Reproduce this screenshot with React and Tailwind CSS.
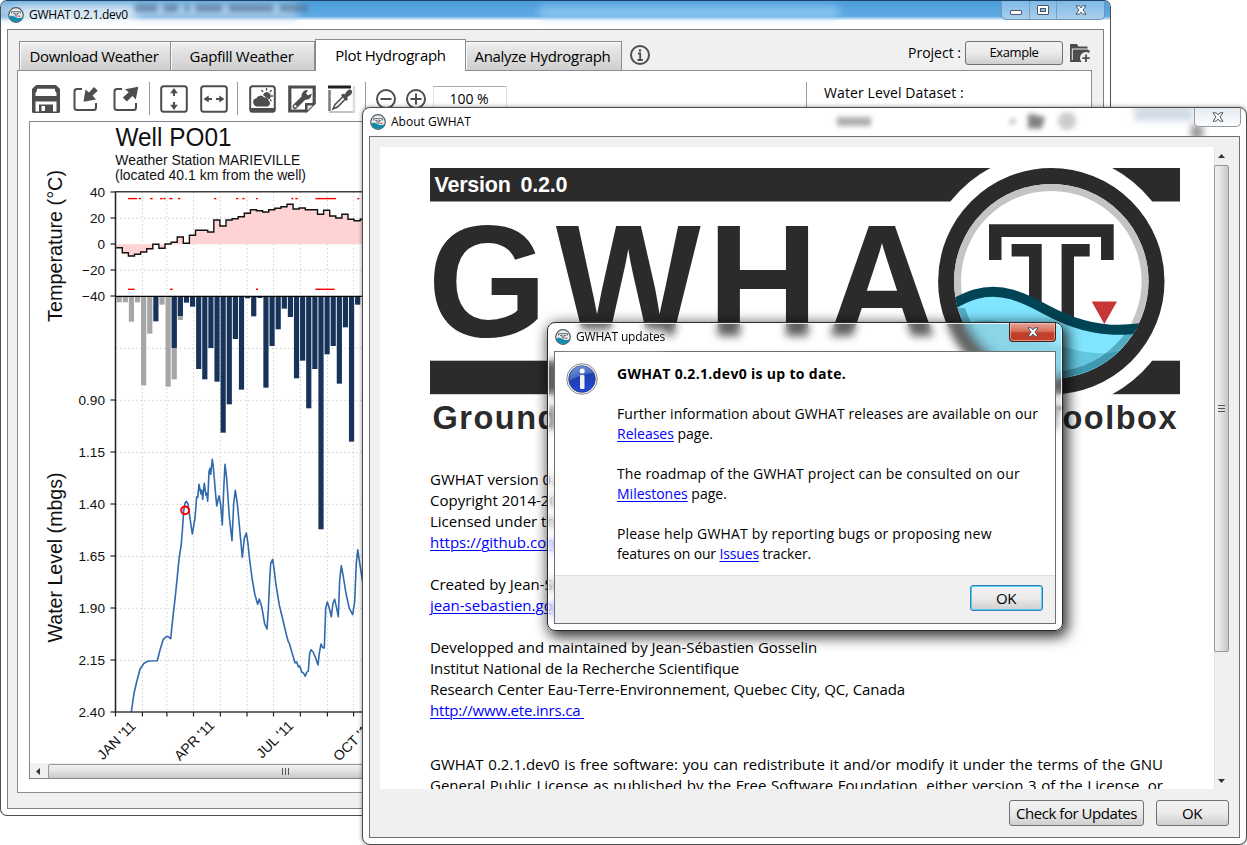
import React from "react";

const INK = "#4d4d4d";

/* ---------- chart data ---------- */
const TEMP = [383, 398, 408, 403, 396, 386, 373, 385, 372, 367, 351, 370, 346, 331, 331, 336, 300, 318, 300, 296, 290, 280, 269, 272, 276, 269, 265, 260, 253, 267, 264, 269, 269, 283, 271, 288, 294, 283, 298, 302, 298];
// [rain depth, snow depth] measured along the inverted axis
const PRECIP = [[0, 37], [0, 37], [0, 95], [0, 37], [0, 286], [0, 131], [94, 0], [0, 44], [0, 290], [174, 268], [78, 90], [38, 0], [50, 0], [237, 0], [268, 0], [174, 0], [275, 0], [428, 0], [343, 0], [147, 0], [299, 0], [25, 0], [79, 0], [24, 0], [293, 0], [168, 0], [118, 0], [56, 0], [81, 0], [265, 0], [212, 0], [355, 0], [237, 0], [718, 0], [193, 0], [168, 0], [281, 0], [112, 0], [455, 0], [44, 0]];
const LEVEL = [[394, 636], [402, 580], [410, 545], [420, 508], [432, 490], [445, 483], [472, 482], [480, 450], [490, 418], [500, 409], [507, 412], [512, 416], [520, 340], [526, 290], [532, 230], [538, 170], [543, 140], [547, 95], [551, 32], [555, 10], [559, 4], [564, 12], [570, 55], [577, 102], [585, 55], [590, -10], [593, -8], [597, -47], [603, -18], [605, -30], [608, -2], [613, -50], [618, -14], [620, -20], [623, 4], [627, -85], [630, -95], [632, -77], [637, -122], [640, -100], [647, -15], [650, 18], [657, -13], [662, 15], [667, 75], [671, -30], [675, -107], [680, -65], [688, 50], [696, 122], [701, 10], [706, -29], [712, 10], [719, 88], [727, 172], [733, 115], [739, 99], [743, 125], [749, 180], [757, 240], [765, 285], [773, 313], [778, 297], [785, 320], [794, 372], [801, 387], [805, 330], [809, 240], [812, 190], [818, 178], [822, 205], [828, 255], [838, 315], [850, 365], [860, 408], [865, 425], [868, 430], [878, 465], [885, 488], [890, 486], [895, 500], [899, 498], [905, 516], [910, 518], [916, 529], [920, 517], [925, 513], [929, 460], [933, 449], [940, 457], [947, 475], [954, 495], [958, 460], [963, 432], [968, 443], [973, 444], [977, 325], [982, 306], [988, 325], [994, 350], [999, 310], [1004, 298], [1009, 320], [1015, 350], [1019, 240], [1024, 197], [1030, 230], [1038, 280], [1048, 325], [1058, 344], [1064, 305], [1069, 190], [1073, 149], [1080, 195], [1092, 270]];
const GAPS_TOP = [[384, 411], [416, 423], [450, 458], [480, 488], [490, 497], [508, 518], [534, 541], [642, 649], [708, 715], [727, 734], [768, 774], [874, 880], [886, 893], [946, 1008], [1072, 1078]];
const GAPS_BOTTOM = [[384, 404], [510, 518], [768, 774], [946, 1004]];
const MONTHS = [142.4, 166.9, 193.5, 220.4, 247, 273.5, 300.4, 327.4, 353.6];

const BIN = 6.1;
const X0 = 116.2;

function Hydrograph() {
  let step = "";
  TEMP.forEach((v, i) => {
    const y = (120 + v / 3).toFixed(1);
    const x = X0 + i * BIN;
    step += (i ? "L" : "M") + x.toFixed(1) + " " + y + "L" + (x + BIN).toFixed(1) + " " + y;
  });
  const area = step + `L${X0 + TEMP.length * BIN} 244.2L${X0} 244.2Z`;
  const level = LEVEL.map(([x, y]) => (x / 3).toFixed(1) + "," + (500 + y / 3).toFixed(1)).join(" ");
  const yLabels = [["40", 192], ["20", 218], ["0", 244], ["−20", 270], ["−40", 296], ["0.90", 400], ["1.15", 452], ["1.40", 504], ["1.65", 556], ["1.90", 608], ["2.15", 660], ["2.40", 712]];
  return (
    <svg viewBox="30 122 345 641" width="345" height="641" className="block shrink-0" fontFamily="'Liberation Sans', Arial, sans-serif">
      <g stroke="#cfcfcf" strokeWidth="1" strokeDasharray="1.5 2.5" fill="none">
        {MONTHS.map((x) => <path key={x} d={`M${x} 192V712`} />)}
        {[218, 270, 348, 400, 452, 504, 556, 608, 660].map((y) => <path key={y} d={`M116 ${y + 0.3}H375`} />)}
      </g>
      <path d={area} fill="#ffd3d3" />
      <path d={step} fill="none" stroke="#111" strokeWidth="1.4" />
      <g stroke="#f00" strokeWidth="1.4">
        {GAPS_TOP.map(([a, b]) => <path key={a} d={`M${a / 3} 198.6H${b / 3}`} />)}
        {GAPS_BOTTOM.map(([a, b]) => <path key={a} d={`M${a / 3} 289.3H${b / 3}`} />)}
      </g>
      {PRECIP.map(([rain, snow], i) => {
        const x = 116.6 + i * 6.115;
        return (
          <g key={i}>
            {snow > 0 && <rect x={x} y="296.5" width="5.2" height={290 + snow / 3 - 296.5} fill="#a6a6a6" />}
            {rain > 0 && <rect x={x} y="296.5" width="5.2" height={290 + rain / 3 - 296.5} fill="#18335a" />}
          </g>
        );
      })}
      <polyline points={level} fill="none" stroke="#3269ad" strokeWidth="1.6" strokeLinejoin="round" />
      <circle cx="185.1" cy="510.3" r="3.9" fill="none" stroke="#f00" strokeWidth="2" />
      <path d="M115.5 296.3H375" stroke="#000" strokeWidth="1.3" />
      <path d="M375 191.8H115.5V712H375" fill="none" stroke="#3c3f3c" strokeWidth="1.4" />
      <path d="M115.5 191.5V712.5" stroke="#222" strokeWidth="1.2" />
      <g stroke="#222" strokeWidth="1.2">
        {yLabels.map(([t, y]) => <path key={t} d={`M110.5 ${y}H115.5`} />)}
        {[115.5, ...MONTHS].map((x) => <path key={x} d={`M${x} 712V716.5`} />)}
      </g>
      <g fill="#111">
        <text x="115.5" y="146.2" fontSize="25.3" textLength="116" lengthAdjust="spacingAndGlyphs">Well PO01</text>
        <text x="115.3" y="165" fontSize="14" textLength="185" lengthAdjust="spacingAndGlyphs">Weather Station MARIEVILLE</text>
        <text x="115" y="179.6" fontSize="14" textLength="191" lengthAdjust="spacingAndGlyphs">(located 40.1 km from the well)</text>
        {yLabels.map(([t, y]) => (
          <text key={t} x="105" y={y + 4.6} fontSize="13.6" textAnchor="end">{t}</text>
        ))}
        <text transform="translate(61.9 322) rotate(-90)" fontSize="20" textLength="152" lengthAdjust="spacingAndGlyphs">Temperature (°C)</text>
        <text transform="translate(61.9 642.5) rotate(-90)" fontSize="20" textLength="170" lengthAdjust="spacingAndGlyphs">Water Level (mbgs)</text>
        {[["JAN '11", 103, 760.5], ["APR '11", 180, 761.5], ["JUL '11", 262, 759], ["OCT '11", 339, 762]].map(([t, x, y]) => (
          <text key={t} transform={`translate(${x} ${y}) rotate(-45)`} fontSize="14">{t}</text>
        ))}
      </g>
    </svg>
  );
}

/* ---------- logo ---------- */
function LogoMark({ id }) {
  return (
    <g>
      <defs>
        <clipPath id={id}><circle cx="1051.3" cy="281.2" r="97.5" /></clipPath>
        <clipPath id={`${id}-water`}><path d="M940 308H1000L1080 325H1160V400H940Z" /></clipPath>
      </defs>
      <circle cx="1051.3" cy="281.2" r="105.2" fill="#fff" stroke="#2b2b2b" strokeWidth="16" />
      <circle cx="1051.3" cy="281.2" r="93.8" fill="none" stroke="#c4c4c4" strokeWidth="7" />
      <path d="M989 224.2H1113.7V260H1101V237H1001.5V260H989Z" fill="#2b2b2b" />
      <path d="M1011.6 244H1041.7V320H1029V256.4H1011.6ZM1061.6 244H1089.7V256.4H1074V330H1061.6Z" fill="#2b2b2b" />
      <g clipPath={`url(#${id})`}>
        <path d="M940 313C965 297 985 290 1012 295C1035 300 1050 313 1075 321C1100 330 1120 331 1150 327V400H940Z" fill="#80e5ff" />
        <path d="M955 330C985 310 1015 325 1040 337C1065 349 1090 355 1110 353L1150 345V400H960Z" fill="#5bbcd6" opacity=".75" />
        <circle cx="1051.3" cy="281.2" r="93.8" fill="none" stroke="#004455" strokeOpacity=".35" strokeWidth="7" clipPath={`url(#${id}-water)`} />
        <path d="M940 312C965 296 985 286.500 1012 294.500C1037 302 1052 315.500 1075 322.500C1100 331 1120 331.500 1150 327" fill="none" stroke="#004455" strokeWidth="10" />
      </g>
      <path d="M1091.7 301.500H1117L1104.300 324Z" fill="#c83737" />
    </g>
  );
}

function AppIcon() {
  return (
    <svg viewBox="0 0 16 16" width="16" height="16" className="shrink-0">
      <circle cx="8" cy="8" r="7.300" fill="#e9eef0" stroke="#4f5b62" strokeWidth="1.200" />
      <path d="M1.300 9.500C3.500 8 5.500 9 8 10.200S12.500 11.500 14.800 10A7 7 0 0 1 8 15A7 7 0 0 1 1.300 9.500Z" fill="#138bad" />
      <path d="M3.500 6.500V4.700H12.500V6.500" fill="none" stroke="#5f666b" strokeWidth="1" />
      <path d="M5.200 6.500H7.200V9.500M10.800 6.500H9V10" fill="none" stroke="#5f666b" strokeWidth="1" />
      <rect x="10.500" y="8.500" width="1.800" height="1.500" fill="#e04a4a" />
    </svg>
  );
}

function Banner() {
  return (
    <svg viewBox="430 168 750 270" width="750" height="270" className="block" fontFamily="'Liberation Sans', Arial, sans-serif" fontWeight="bold">
      <rect x="430" y="168" width="750" height="33.500" fill="#2b2b2b" />
      <rect x="430" y="360.700" width="750" height="33.500" fill="#2b2b2b" />
      <circle cx="1051.3" cy="281.2" r="128.500" fill="#fff" />
      <text x="434.500" y="192" fontSize="21.500" fill="#fff" textLength="133" wordSpacing="4">Version 0.2.0</text>
      <g transform="translate(427.700 0) scale(.96 1)">
        <text x="0 133.500 291.500 415.300" y="336.300" fontSize="160" fill="#2b2b2b">GWHA</text>
      </g>
      <LogoMark id="logo-large" />
      <text x="432.500" y="428.500" fontSize="32.500" fill="#2b2b2b" textLength="744">Ground-Water Hydrograph Analysis Toolbox</text>
    </svg>
  );
}

/* ---------- toolbar icons ---------- */
const Icon = ({ children, w = 28 }) => (
  <svg viewBox={`0 0 ${w} ${w}`} width={w} height={w} className="shrink-0" fill="none" stroke={INK} strokeWidth="2">{children}</svg>
);
const SaveIcon = () => (
  <Icon>
    <path d="M4 0H24L28 4V26.500Q28 28 26.500 28H1.500Q0 28 0 26.500V4Z" fill={INK} stroke="none" />
    <path d="M5 3.800H23V5.800L24.500 8V11H3.500V8L5 5.800Z" fill="#fff" stroke="none" />
    <path d="M3.500 16.500H24.500V26.500H21V19.500H7V26.500H3.500Z" fill="#fff" stroke="none" />
    <path d="M9.500 21H13V26H9.500Z" fill="#fff" stroke="none" />
  </Icon>
);
const ImportIcon = () => (
  <Icon>
    <path d="M10 4H5Q2.500 4 2.500 6.500V22.500Q2.500 25 5 25H21.500Q24 25 24 22.500V18" />
    <path d="M22 2L25.800 5.800L20.500 10.500L24 14.500L11.500 16.800L13.500 4.500L17 7.500Z" fill={INK} stroke="none" />
  </Icon>
);
const ExportIcon = () => (
  <Icon>
    <path d="M10 4H5Q2.500 4 2.500 6.500V22.500Q2.500 25 5 25H21.500Q24 25 24 22.500V18" />
    <path d="M26.300 1.800L23.800 14.500L20.500 11L14.800 16.500L10.800 12.500L16.800 7.200L13 4.200Z" fill={INK} stroke="none" />
  </Icon>
);
const FitHeightIcon = () => (
  <Icon>
    <rect x="1.200" y="1.200" width="25.600" height="25.600" rx="2.500" />
    <path d="M14 5V11M14 23V17" strokeWidth="2" />
    <path d="M14 3L17.800 8.200H10.200ZM14 25L17.800 19.800H10.200Z" fill={INK} stroke="none" />
  </Icon>
);
const FitWidthIcon = () => (
  <Icon>
    <rect x="1.200" y="1.200" width="25.600" height="25.600" rx="2.500" />
    <path d="M5 14H12M23 14H16" strokeWidth="2" />
    <path d="M3.500 14L8.700 10.500V17.500ZM24.500 14L19.300 10.500V17.500Z" fill={INK} stroke="none" />
  </Icon>
);
const WeatherIcon = () => (
  <Icon>
    <rect x="2.200" y="1.200" width="24.600" height="25.600" rx="2.500" />
    <path d="M2 23H27V26.500H2Z" fill={INK} stroke="none" />
    <path d="M9 21.500A4.200 4.200 0 0 1 8.500 13.200A4.300 4.300 0 0 1 16 12.500A3.500 3.500 0 0 1 20.500 15.500A3.300 3.300 0 0 1 19.500 21.500Z" fill={INK} stroke="none" />
    <path d="M15 10A4 4 0 1 1 21 14.500" fill={INK} stroke="none" />
    <path d="M18.500 3V5.500M13.500 5L15 7M23.500 5L22 7M25 11H22.800M23.500 16L22 14.500" strokeWidth="1.300" />
  </Icon>
);
const WrenchIcon = () => (
  <Icon>
    <path d="M1.800 2H26.200V18L18.500 26H1.800Z" strokeWidth="3.200" />
    <path d="M17 28V18H28Z" fill={INK} stroke="none" />
    <path d="M19.500 25.500V20.500H25Z" fill="#fff" stroke="none" opacity=".85" />
    <path d="M7 21.500L17 11.500" strokeWidth="5" strokeLinecap="round" />
    <path d="M14 12.500A5.500 5.500 0 0 1 20 5L18 8.500L20 10.500L23.500 8.500A5.500 5.500 0 0 1 16.500 14.500Z" fill={INK} stroke="none" />
    <circle cx="7.300" cy="21.200" r="1.200" fill="#fff" stroke="none" />
  </Icon>
);
const DropperIcon = () => (
  <Icon>
    <path d="M0 2H23" stroke="#1f1f1f" strokeWidth="3" />
    <path d="M1.500 5V26" stroke="#7a7a7a" strokeWidth="2.500" />
    <path d="M26 1V28" stroke="#dcdcdc" strokeWidth="2.500" />
    <path d="M1 27H25" stroke="#c2c2c2" strokeWidth="2" />
    <path d="M5 24L7 19.500L15.500 11L18 13.500L9.500 22Z" fill="#f4f4f4" strokeWidth="1.500" />
    <path d="M13 10.500L15 8.500L16.500 9.500L19.500 5.500Q22 3.500 23.500 5.200Q25 7 23 9.500L19 12.500L20 14L18.200 16Z" fill={INK} stroke="none" />
  </Icon>
);
const ZoomIcon = ({ plus }) => (
  <Icon w={20}>
    <circle cx="10" cy="10" r="9" />
    <path d={plus ? "M4.500 10H15.500M10 4.500V15.500" : "M4.500 10H15.500"} />
  </Icon>
);
const InfoIcon = () => (
  <Icon w={20}>
    <circle cx="10" cy="10" r="9" />
    <path d="M8 8.500H10.200V15M7.500 15H12.800" strokeWidth="1.800" />
    <circle cx="10" cy="5.500" r="1.200" fill={INK} stroke="none" />
  </Icon>
);
const FolderIcon = () => (
  <svg viewBox="0 0 20 20" width="20" height="20" className="shrink-0">
    <path d="M0 1H7L8.500 3.500H17.500V7H19.500V19H0Z" fill={INK} />
    <path d="M2.300 17V6H17.500" stroke="#f0f0f0" fill="none" strokeWidth="1" />
    <circle cx="16" cy="15" r="6" fill="#f0f0f0" />
    <path d="M16 11.500V19M12.300 15.200H19.700" stroke={INK} strokeWidth="1.800" />
  </svg>
);
const Sep = () => <div className="h-[33px] w-px shrink-0 bg-[#9a9a9a]" />;

const CloseGlyph = () => (
  <svg viewBox="0 0 12 10" width="12" height="10">
    <path d="M1 0.800H4.200L6 2.900L7.800 0.800H11L8 5L11 9.200H7.800L6 7.100L4.200 9.200H1L4 5Z" fill="#fff" stroke="#4e5566" strokeWidth="1" />
  </svg>
);

function Tab({ className, children }) {
  return (
    <div className={"box-border flex items-center justify-center border border-b-0 border-[#898c95] " + className}>{children}</div>
  );
}
const TAB_OFF = "h-[29px] pr-[2px] bg-linear-to-b from-[#f2f2f2] from-0% via-[#e2e2e2] via-35% to-[#cfcfcf] shadow-[inset_1px_1px_0_#fafafa]";

function PushButton({ className, children }) {
  return (
    <div className={"flex items-center justify-center rounded-[3px] border bg-linear-to-b from-[#f3f3f3] from-0% via-[#ebebeb] via-49% to-[#cfcfcf] whitespace-nowrap " + className}>{children}</div>
  );
}

function MainWindow() {
  return (
    <div className="absolute top-0 left-0 flex h-[816px] w-[1111px] flex-col rounded-[7px] border border-[#4c4f55] border-t-[#1d4468] bg-white px-[6px] pb-[6px]">
      <div className="-mx-[6px] flex h-[28px] shrink-0 items-start overflow-hidden rounded-t-[6px] bg-linear-to-b from-[#4b9ddb] from-0% via-[#5fabe2] via-55% to-white to-70%">
        <div className="relative flex h-[28px] w-[330px] items-center pl-[7px]">
          <div className="absolute top-[1px] -left-2 h-[17px] w-[305px] bg-[#b9d3ea] opacity-80 blur-[5px]" />
          <div className="absolute top-[8px] left-[14px] h-[14px] w-[120px] bg-white opacity-80 blur-[6px]" />
          <div className="absolute top-[3px] left-[134px] flex h-[8px] gap-[7px] opacity-60 blur-[2px]">
            <div className="w-[22px] bg-[#4f7096]" /><div className="w-[14px] bg-[#4f7096]" /><div className="w-[4px] bg-[#4f7096]" /><div className="w-[26px] bg-[#4f7096]" /><div className="w-[44px] bg-[#4f7096]" /><div className="w-[28px] bg-[#4f7096]" />
          </div>
          <div className="relative flex items-center gap-[5px]">
            <AppIcon />
            <span className="text-[12px] tracking-[-0.25px] whitespace-nowrap">GWHAT 0.2.1.dev0</span>
          </div>
        </div>
        <div className="mt-[5px] ml-[208px] h-[12px] w-[300px] rounded bg-[#9bd0f8] opacity-70 blur-[4px]" />
        <div className="ml-[162px] flex h-[19px] w-[104px] divide-x divide-[#7f9fbd] rounded-b-[5px] border border-t-0 border-[#7494b3] bg-linear-to-b from-[#7fb9e5] to-[#a9d0ee]">
          <div className="flex w-[28px] items-end justify-center pb-[4px]"><div className="h-[5px] w-[12px] rounded-[1px] border border-[#4e5566] bg-white" /></div>
          <div className="flex w-[27px] items-center justify-center"><div className="flex h-[10px] w-[12px] items-center justify-center rounded-[1px] border border-[#4e5566] bg-white"><div className="h-[4px] w-[6px] border border-[#4e5566] bg-[#8cc0e8]" /></div></div>
          <div className="flex flex-1 items-center justify-center"><CloseGlyph /></div>
        </div>
      </div>
      <div className="flex min-h-0 flex-1 flex-col border border-[#7d7f83] bg-[#f0f0f0] pr-[11px] pb-[15px] pl-[9px]">
        <div className="flex h-[40px] shrink-0 items-end pl-[2px] text-[15px]">
          <Tab className={TAB_OFF + " w-[152px] tracking-[-0.36px]"}>Download Weather</Tab>
          <Tab className={TAB_OFF + " w-[144px] border-l-0 tracking-[-0.3px]"}>Gapfill Weather</Tab>
          <Tab className="relative z-10 -mb-px h-[32px] w-[151px] bg-white pb-[1px] tracking-[-0.3px]">Plot Hydrograph</Tab>
          <Tab className={TAB_OFF + " w-[156px] border-l-0 pr-0 tracking-[-0.31px]"}>Analyze Hydrograph</Tab>
          <div className="ml-[8px] flex h-[31px] items-center"><InfoIcon /></div>
          <div className="mr-[2px] ml-auto flex h-[35px] items-center gap-[4px]">
            <span className="text-[14px]">Project :</span>
            <PushButton className="h-[24px] w-[98px] border-[#707070] text-[13px] tracking-[-0.4px]">Example</PushButton>
            <div className="ml-[3px]"><FolderIcon /></div>
          </div>
        </div>
        <div className="flex min-h-0 flex-1 border border-[#898c95] bg-white">
          <div className="flex w-[788px] shrink-0 flex-col pt-[11px] pb-[13px] pl-[11px]">
            <div className="flex h-[33px] items-center pl-[3px]">
              <SaveIcon /><div className="w-[12px]" /><ImportIcon /><div className="w-[12px]" /><ExportIcon />
              <div className="w-[9px]" /><Sep /><div className="w-[10px]" />
              <FitHeightIcon /><div className="w-[12px]" /><FitWidthIcon />
              <div className="w-[9px]" /><Sep /><div className="w-[10px]" />
              <WeatherIcon /><div className="w-[12px]" /><WrenchIcon /><div className="w-[12px]" /><DropperIcon />
              <div className="w-[9px]" /><Sep /><div className="w-[10px]" />
              <ZoomIcon /><div className="w-[10px]" /><ZoomIcon plus />
              <div className="ml-[7px] flex h-[26px] w-[74px] items-center justify-center border border-[#dfe2e8] border-t-[#abadb3] pr-[2px] text-[14px]">100 %</div>
            </div>
            <div className="mt-[6px] flex min-h-0 flex-1 flex-col overflow-hidden border border-[#828790]">
              <Hydrograph />
              <div className="flex h-[16px] shrink-0 items-center bg-[#efefef]">
                <div className="flex w-[18px] justify-center pr-[2px]"><svg width="4" height="7" viewBox="0 0 4 7"><path d="M4 0V7L0 3.500Z" fill="#333" /></svg></div>
                <div className="flex h-[15px] flex-1 items-center rounded-[2px] border border-[#979797] bg-linear-to-b from-[#f2f2f2] from-0% via-[#e3e3e3] via-45% to-[#c8c8cb] pl-[233px]">
                  <div className="flex gap-[2px]">
                    <div className="h-[7px] w-px bg-[#555]" /><div className="h-[7px] w-px bg-[#555]" /><div className="h-[7px] w-px bg-[#555]" />
                  </div>
                </div>
              </div>
            </div>
          </div>
          <div className="flex gap-[17px] pt-[11px]">
            <Sep />
            <span className="pt-[4px] text-[14px] tracking-[0.1px]">Water Level Dataset :</span>
          </div>
        </div>
      </div>
    </div>
  );
}

const Line = ({ children, className = "" }) => <div className={"h-[21px] leading-[21px] whitespace-nowrap " + className}>{children}</div>;
const LINK = "text-[#0000ff] underline decoration-1 underline-offset-2";

function AboutWindow() {
  return (
    <div className="absolute top-[107px] left-[362px] flex h-[738px] w-[885px] flex-col rounded-[8px] border border-[#4c4c4c] bg-white px-[6px] pb-[6px] shadow-[0_0_4px_rgba(0,0,0,0.45)]">
      <div className="relative -mx-[6px] flex h-[28px] shrink-0 justify-between overflow-hidden rounded-t-[7px]">
        <div className="flex items-center gap-[5px] pl-[7px]">
          <AppIcon />
          <span className="text-[12px]">About GWHAT</span>
        </div>
        <div className="flex items-start">
          <div className="mr-[58px] flex h-[26px] items-center gap-[13px] opacity-70 blur-[2.500px]">
            <div className="mr-[126px] h-[9px] w-[34px] bg-[#8a8a8a]" />
            <div className="size-[5px] rounded-full bg-[#777]" />
            <div className="h-[15px] w-[17px] bg-[#4a4a4a] [clip-path:polygon(0_0,100%_25%,80%_100%,0_100%)]" />
            <div className="size-[18px] rounded-full bg-[#b5b5b5]" />
          </div>
          <div className="mt-[-4px] h-[17px] w-[60px] bg-[#c9d4e0] opacity-80 blur-[3px]" />
          <div className="relative z-10 mr-[5px] flex h-[19px] w-[47px] items-center justify-center rounded-b-[5px] border border-t-0 border-[#96999e] bg-linear-to-b from-[#e6ebf1] to-[#fbfcfd]"><CloseGlyph /></div>
          <div className="absolute top-[17px] left-[828px] h-[14px] w-[12px] bg-[#999] blur-[3px]" />
        </div>
      </div>
      <div className="flex min-h-0 flex-1 flex-col border border-[#6f6f6f] bg-[#f0f0f0] pt-[10px] pr-[10px] pl-[10px]">
        <div className="flex h-[642px] shrink-0">
          <div className="w-[834px] overflow-hidden bg-white pt-[21px] pl-[50px] text-[15px]">
            <Banner />
            <div className="mt-[31px] w-[733px]">
              <Line>GWHAT version 0.2.1.dev0</Line>
              <Line>Copyright 2014-2017 Jean-Sebastien Gosselin</Line>
              <Line>Licensed under the terms of the GNU GPLv3</Line>
              <Line><span className={LINK}>https://github.com/jnsebgosselin/gwhat</span></Line>
              <Line />
              <Line>Created by Jean-Sébastien Gosselin</Line>
              <Line><span className={LINK}>jean-sebastien.gosselin@ete.inrs.ca</span></Line>
              <Line />
              <Line className="tracking-[-0.03px]">Developped and maintained by Jean-Sébastien Gosselin</Line>
              <Line className="tracking-[-0.08px]">Institut National de la Recherche Scientifique</Line>
              <Line className="tracking-[-0.09px]">Research Center Eau-Terre-Environnement, Quebec City, QC, Canada</Line>
              <Line className="tracking-[-0.2px] whitespace-pre"><span className={LINK}>{"http://www.ete.inrs.ca "}</span></Line>
              <div className="mt-[33px]">
                <div className="h-[21px] leading-[21px] whitespace-nowrap [text-align-last:justify]">GWHAT 0.2.1.dev0 is free software: you can redistribute it and/or modify it under the terms of the GNU</div>
                <div className="h-[21px] leading-[21px] whitespace-nowrap [text-align-last:justify]">General Public License as published by the Free Software Foundation, either version 3 of the License, or</div>
              </div>
            </div>
          </div>
          <div className="flex w-[15px] flex-col bg-[#f0f0f0] shadow-[inset_1px_0_0_#e3e3e3]">
            <div className="flex h-[18px] items-center justify-center"><svg width="7" height="4" viewBox="0 0 7 4"><path d="M0 4H7L3.500 0Z" fill="#333" /></svg></div>
            <div className="flex h-[487px] flex-col items-center justify-center gap-[2px] rounded-[2px] border border-[#979797] bg-linear-to-r from-[#f2f2f2] from-0% via-[#e3e3e3] via-45% to-[#c8c8cb]">
              <div className="h-px w-[7px] bg-[#555]" /><div className="h-px w-[7px] bg-[#555]" /><div className="h-px w-[7px] bg-[#555]" />
            </div>
            <div className="mt-auto flex h-[17px] items-center justify-center"><svg width="7" height="4" viewBox="0 0 7 4"><path d="M0 0H7L3.500 4Z" fill="#333" /></svg></div>
          </div>
        </div>
        <div className="mt-[11px] flex justify-end gap-[12px] text-[15px]">
          <PushButton className="h-[26px] w-[135px] border-[#707070] tracking-[-0.45px]">Check for Updates</PushButton>
          <PushButton className="h-[26px] w-[73px] border-[#707070] pr-[1px] tracking-[-0.4px]">OK</PushButton>
        </div>
      </div>
    </div>
  );
}

const MLine = ({ children, className = "" }) => <div className={"h-[20px] leading-[20px] whitespace-nowrap " + className}>{children}</div>;

function UpdatesDialog() {
  return (
    <div className="absolute top-[322px] left-[547px] flex h-[309px] w-[516px] flex-col rounded-[8px] border border-[#2a2a2a] bg-white/25 px-[6px] pb-[6px] shadow-[inset_0_0_0_1px_rgba(255,255,255,0.8),3px_4px_14px_2px_rgba(0,0,0,0.8)] backdrop-blur-[4px]">
      <div className="relative flex h-[28px] shrink-0 justify-between">
        <div className="absolute top-[6px] left-[2px] h-[18px] w-[112px] rounded-full bg-white/90 blur-[5px]" />
        <div className="relative flex items-center gap-[5px] pl-[1px]">
          <AppIcon />
          <span className="text-[12px] tracking-[-0.18px]">GWHAT updates</span>
        </div>
        <div className="flex h-[19px] w-[47px] items-center justify-center rounded-b-[4px] border border-t-0 border-[#4a1c1a] bg-linear-to-b from-[#e4a397] from-0% via-[#d8705c] via-45% to-[#c2402a] to-55% shadow-[inset_0_0_0_1px_rgba(255,220,210,0.5)]"><CloseGlyph /></div>
      </div>
      <div className="flex min-h-0 flex-1 flex-col border border-[#6f6f6f] bg-[#f0f0f0]">
        <div className="flex h-[224px] shrink-0 gap-[19px] border-b border-[#dfdfdf] bg-white pt-[11px] pl-[11px] text-[14px]">
          <svg viewBox="0 0 32 32" width="32" height="32" className="shrink-0">
            <defs>
              <linearGradient id="info-blue" x1="0" y1="0" x2="0.3" y2="1">
                <stop offset="0" stopColor="#4f86dd" /><stop offset=".5" stopColor="#1c3fae" /><stop offset="1" stopColor="#2447d8" />
              </linearGradient>
            </defs>
            <circle cx="16" cy="16" r="15.300" fill="#f2f2f2" stroke="#8b8b8b" strokeWidth="1" />
            <circle cx="16" cy="16" r="13.300" fill="url(#info-blue)" stroke="#2b3f7a" strokeWidth=".8" />
            <path d="M3.500 18A13 13 0 0 1 28 10Q17 10 3.500 18Z" fill="#fff" opacity=".2" />
            <circle cx="16.200" cy="8" r="2.500" fill="#fff" />
            <rect x="14" y="12" width="4.500" height="14" rx="1" fill="#f1f1f1" />
          </svg>
          <div className="pt-[1px]">
            <MLine className="text-[14px] font-bold tracking-[0.32px]">GWHAT 0.2.1.dev0 is up to date.</MLine>
            <MLine />
            <MLine className="tracking-[0.085px]">Further information about GWHAT releases are available on our</MLine>
            <MLine><span className={LINK}>Releases</span> page.</MLine>
            <MLine />
            <MLine className="tracking-[0.16px]">The roadmap of the GWHAT project can be consulted on our</MLine>
            <MLine><span className={LINK}>Milestones</span> page.</MLine>
            <MLine />
            <MLine className="tracking-[0.18px]">Please help GWHAT by reporting bugs or proposing new</MLine>
            <MLine className="tracking-[-0.15px]">features on our <span className={LINK}>Issues</span> tracker.</MLine>
          </div>
        </div>
        <div className="flex justify-end pt-[9px] pr-[12px]">
          <PushButton className="h-[26px] w-[73px] border-[#3c7fb1] pr-[1px] text-[15px] tracking-[-0.4px] shadow-[inset_0_0_0_1px_#46d0f5]">OK</PushButton>
        </div>
      </div>
    </div>
  );
}

export default function App() {
  return (
    <div className="relative h-[845px] w-[1247px] overflow-hidden bg-white font-['Open_Sans','Noto_Sans',sans-serif] leading-none text-black">
      <MainWindow />
      <AboutWindow />
      <UpdatesDialog />
    </div>
  );
}
